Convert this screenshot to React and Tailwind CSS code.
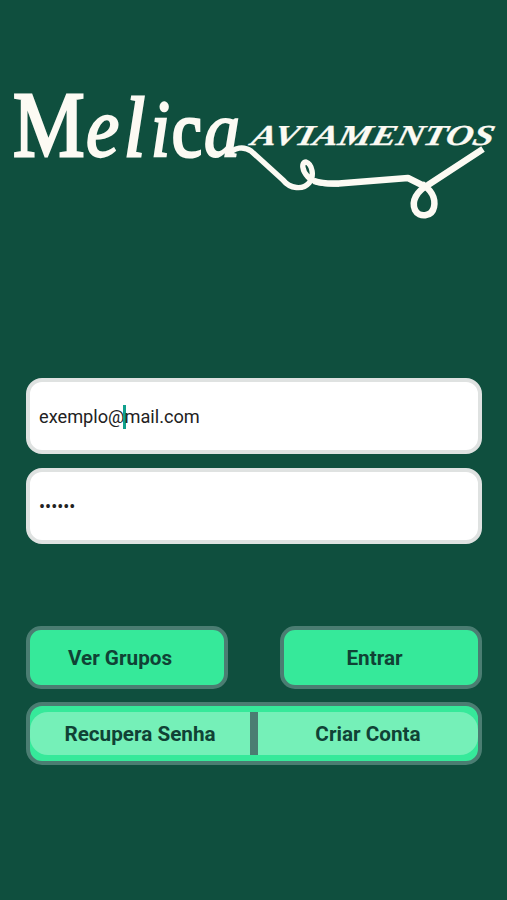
import React, { useState } from 'react';

const Logo = () => (
    <svg viewBox="0 -60 507 220" className="block h-[220px] w-[507px]" fill="#fcfaf3" aria-label="Melica Aviamentos">
        <g fontFamily="Liberation Serif, serif" fontSize="97" stroke="#fcfaf3" strokeWidth="2.6">
            <text transform="translate(13 76) scale(0.83 0.96)" strokeWidth="3">M</text>
            <g fontStyle="italic">
                <text transform="translate(86 76) scale(0.77 0.88)">e</text>
                <text transform="translate(124 76) scale(0.78 0.88)" strokeWidth="3.4">l</text>
                <text transform="translate(151 76) scale(0.7 0.82)" strokeWidth="3">i</text>
                <text transform="translate(204 76) scale(0.74 0.8)">a</text>
            </g>
            <text transform="translate(172 76) scale(0.69 0.81)" strokeWidth="4">c</text>
        </g>
        <text
            transform="translate(250 65) skewX(-14)"
            fontFamily="Liberation Serif, serif"
            fontSize="29"
            fontWeight="bold"
            fontStyle="italic"
            textLength="242"
            lengthAdjust="spacingAndGlyphs"
            stroke="#fcfaf3"
            strokeWidth="0.3"
        >
            AVIAMENTOS
        </text>

        {/* Thread */}
        <g fill="none" stroke="#fcfaf3" strokeLinejoin="round">
            <path strokeWidth="5.4" d="M228 75 C234 67 244 66 251 71 L283 100 C290 109 303 110 309 103 C315 96 312 84 306 82 C301 82 302 91 308 97 C315 104 327 104 339 104" />
            <path strokeWidth="6.5" d="M314 101 C323 104 334 104 345 103 L408 98 L424 106" />
            <path strokeWidth="6.5" d="M483 69 L428 105 C417 111 411 121 415 130 C419 138 432 137 434 127 C436 117 430 109 422 104" />
        </g>
    </svg>
);

const field = 'flex h-[76px] items-center rounded-[16px] border-[4px] border-[#dfe2e1] bg-white px-[9px] text-[18.2px] text-[#222]';
const button = 'flex h-[63px] w-[202px] cursor-pointer items-center justify-center rounded-[15px] border-[4px] border-[#4b7d72] bg-[#36e99a] pt-0.5';

const App = () => {
    const [showCaret] = useState(true);

    return (
        <main className="flex h-[900px] w-[507px] flex-col overflow-hidden bg-[#0f4f3e] pt-5 font-['Roboto',sans-serif]">
            <Logo />

            <form className="mt-[138px] ml-[26px] flex w-[456px] flex-col" onSubmit={(e) => e.preventDefault()}>
                <div className={`${field} pt-0.5`}>
                    <span>exemplo@</span>
                    {showCaret && <span className="-mr-[2px] -ml-px h-6 w-[3px] bg-[#10a08d]" />}
                    <span>mail.com</span>
                </div>
                <div className={`${field} mt-[14px]`}>
                    <span className="text-[18px]">••••••</span>
                </div>

                <div className="mt-[82px] flex justify-between text-[20.7px] font-bold text-[#104235]">
                    <button type="button" className={`${button} pr-[14px]`}>Ver Grupos</button>
                    <button type="submit" className={`${button} pr-[13px]`}>Entrar</button>
                </div>

                <div className="mt-[13px] flex h-[63px] items-center rounded-[16px] border-[4px] border-[#4b7d72] bg-[#36e99a] text-[20.7px] font-bold text-[#104235]">
                    <button type="button" className="h-[43px] w-[220px] rounded-l-[18px] bg-[#75f0b8] pt-0.5">Recupera Senha</button>
                    <div className="h-[43px] w-2 bg-[#4b7d72]" />
                    <button type="button" className="h-[43px] w-[220px] rounded-r-[18px] bg-[#75f0b8] pt-0.5">Criar Conta</button>
                </div>
            </form>
        </main>
    );
};

export default App;
